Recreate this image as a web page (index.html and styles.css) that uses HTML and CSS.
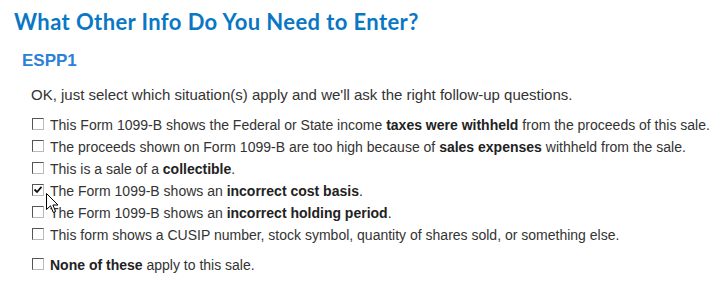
FILE: index.html
```html
<!DOCTYPE html>
<html>
<head>
<meta charset="utf-8">
<link rel="stylesheet" href="styles.css">
</head>
<body>
<div class="page">
  <h1 class="title">What Other Info Do You Need to Enter?</h1>
  <h2 class="sub">ESPP1</h2>
  <p class="intro">OK, just select which situation(s) apply and we'll ask the right follow-up questions.</p>
  <ul class="opts">
    <li class="opt"><span class="box"></span><span>This Form 1099-B shows the Federal or State income <b>taxes were withheld</b> from the proceeds of this sale.</span></li>
    <li class="opt"><span class="box"></span><span>The proceeds shown on Form 1099-B are too high because of <b>sales expenses</b> withheld from the sale.</span></li>
    <li class="opt"><span class="box"></span><span>This is a sale of a <b>collectible</b>.</span></li>
    <li class="opt"><span class="box checked"><svg viewBox="0 0 10 10" width="10" height="10"><path d="M1.5 4.5 L4 7 L8.5 1.8" fill="none" stroke="#111" stroke-width="1.8"/></svg></span><span>The Form 1099-B shows an <b>incorrect cost basis</b>.</span></li>
    <li class="opt"><span class="box"></span><span>The Form 1099-B shows an <b>incorrect holding period</b>.</span></li>
    <li class="opt"><span class="box"></span><span>This form shows a CUSIP number, stock symbol, quantity of shares sold, or something else.</span></li>
  </ul>
  <ul class="opts none">
    <li class="opt"><span class="box"></span><span><b>None of these</b> apply to this sale.</span></li>
  </ul>
  <svg class="cursor" width="13" height="21" viewBox="0 0 13 21"><path d="M0.5 0.5 L0.5 16.5 L4.5 12.8 L7.3 19.5 L9.6 18.5 L6.9 12 L12 12 Z" fill="#fff" stroke="#000" stroke-width="1" stroke-linejoin="miter"/></svg>
</div>
</body>
</html>
```
FILE: styles.css
```css
html, body { margin: 0; padding: 0; background: #fff; }
.page {
  position: relative;
  padding: 8px 0 0 14px;
  font-family: "Liberation Sans", Arial, sans-serif;
  color: #333;
}
.title {
  margin: 0;
  font-family: Lato, "Open Sans", sans-serif;
  font-weight: 700;
  font-size: 22px;
  letter-spacing: 0.4px;
  line-height: 28px;
  color: #0a77c4;
}
.sub {
  margin: 15px 0 0 8px;
  font-size: 17px;
  font-weight: 700;
  line-height: 20px;
  color: #2b80d9;
}
.intro {
  margin: 14px 0 0 17px;
  font-size: 15px;
  line-height: 20px;
}
.opts {
  list-style: none;
  margin: 9px 0 0 18px;
  padding: 0;
  font-size: 14px;
}
.opts.none { margin-top: 8px; }
.opt {
  display: flex;
  align-items: center;
  gap: 6px;
  height: 22px;
}
.opt b { color: #222; }
.box {
  flex: none;
  width: 10px;
  height: 10px;
  background: #fff;
  border: 1px solid;
  border-color: #555 #bbb #bbb #555;
  display: flex;
  align-items: center;
  justify-content: center;
  margin-top: -2px;
}
.cursor {
  position: absolute;
  left: 46px;
  top: 193px;
}
```
